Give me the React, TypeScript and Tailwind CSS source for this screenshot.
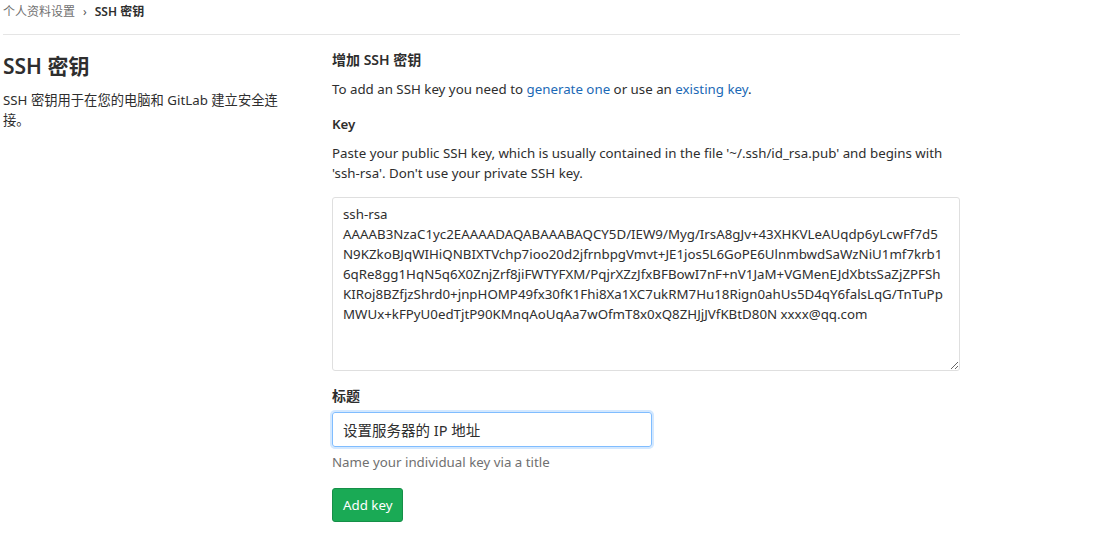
const FONT = "font-['Segoe_UI','Noto_Sans','Noto_Sans_CJK_SC',sans-serif]";

const KEY_TEXT = [
  'ssh-rsa',
  'AAAAB3NzaC1yc2EAAAADAQABAAABAQCY5D/IEW9/Myg/IrsA8gJv+43XHKVLeAUqdp6yLcwFf7d5',
  'N9KZkoBJqWIHiQNBIXTVchp7ioo20d2jfrnbpgVmvt+JE1jos5L6GoPE6UlnmbwdSaWzNiU1mf7krb1',
  '6qRe8gg1HqN5q6X0ZnjZrf8jiFWTYFXM/PqjrXZzJfxBFBowI7nF+nV1JaM+VGMenEJdXbtsSaZjZPFSh',
  'KIRoj8BZfjzShrd0+jnpHOMP49fx30fK1Fhi8Xa1XC7ukRM7Hu18Rign0ahUs5D4qY6falsLqG/TnTuPp',
  'MWUx+kFPyU0edTjtP90KMnqAoUqAa7wOfmT8x0xQ8ZHJjJVfKBtD80N xxxx@qq.com',
].join('\n');

export default function App() {
  return (
    <div className={`${FONT} min-h-[546px] w-[1105px] bg-white text-[#2e2e2e]`}>
      <div className="ml-[3px] w-[957px]">
        {/* Breadcrumb */}
        <div className="flex h-[35px] items-center gap-2 border-b border-[#e5e5e5] pb-[10px] text-[12px]">
          <span className="text-[#707070]">个人资料设置</span>
          <span className="text-[12px] text-[#555]">›</span>
          <span className="font-semibold text-[#2e2e2e]">SSH 密钥</span>
        </div>

        <div className="flex pt-[15px]">
          {/* Left column */}
          <div className="w-[329px] shrink-0">
            <h4 className="mt-[1px] text-[21px] font-semibold leading-[30px]">SSH 密钥</h4>
            <p className="mt-[9px] w-[292px] text-[13.3px] leading-[20px]">
              SSH 密钥用于在您的电脑和 GitLab 建立安全连接。
            </p>
          </div>

          {/* Right column */}
          <div className="flex-1 text-[13.3px] leading-[20px]">
            <h5 className="text-[14px] font-semibold">增加 SSH 密钥</h5>
            <p className="mt-[9px]">
              To add an SSH key you need to{' '}
              <a className="text-[#1b69b6]" href="#">generate one</a> or use an{' '}
              <a className="text-[#1b69b6]" href="#">existing key</a>.
            </p>

            <div className="mt-[15px]">
              <label className="font-semibold">Key</label>
              <p className="mt-[9px]">
                Paste your public SSH key, which is usually contained in the file '~/.ssh/id_rsa.pub' and begins with
                'ssh-rsa'. Don't use your private SSH key.
              </p>
              <textarea
                readOnly
                value={KEY_TEXT}
                className="mt-[14px] block h-[174px] w-[628px] whitespace-pre rounded-[3px] border border-[#dfdfdf] px-[10px] py-[6px] text-[13.3px] leading-[20px] text-[#2e2e2e] outline-none"
              />
            </div>

            <div className="mt-[15px]">
              <label className="text-[14px] font-semibold">标题</label>
              <input
                readOnly
                value="设置服务器的 IP 地址"
                className="mt-[6px] block h-[35px] w-[320px] rounded-[3px] border border-[#80bdff] px-[10px] text-[14.5px] text-[#2e2e2e] shadow-[0_0_0_2px_rgba(128,189,255,0.35)] outline-none"
              />
              <p className="mt-[5px] text-[#707070]">Name your individual key via a title</p>
            </div>

            <button className="mt-[16px] h-[34px] rounded-[3px] border border-[#168f48] bg-[#1aaa55] px-[10px] text-[13.3px] text-white">
              Add key
            </button>
          </div>
        </div>
      </div>
    </div>
  );
}
